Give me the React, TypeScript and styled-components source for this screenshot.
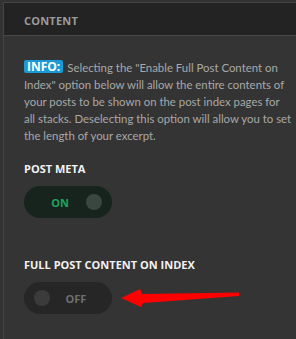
import React from "react";
import styled, { createGlobalStyle } from "styled-components";

const Global = createGlobalStyle`
  html, body { margin: 0; padding: 0; background: #333333; }
  body { font-family: Lato, "Open Sans", sans-serif; }
`;

const Frame = styled.div`
  width: 296px;
  height: 339px;
  background: #333333;
  padding-top: 2px;
  padding-left: 3px;
  box-sizing: border-box;
  overflow: hidden;
`;

const Panel = styled.div`
  border-top: 1px solid #444444;
  border-left: 1px solid #444444;
  background: #343434;
  height: 100%;
`;

const Header = styled.div`
  height: 33px;
  background: #232323;
  border-bottom: 1px solid #464646;
  display: flex;
  align-items: center;
  padding-left: 20px;
  padding-top: 3px;
  box-sizing: border-box;
  font-family: "Open Sans", sans-serif;
  font-size: 11px;
  font-weight: 700;
  letter-spacing: 0.2px;
  color: #9b9b9b;
`;

const Body = styled.div`
  padding: 23px 4px 0 20px;
  display: flex;
  flex-direction: column;
`;

const Info = styled.p`
  margin: 0;
  font-size: 11.4px;
  line-height: 17px;
  color: #a8a8a8;
  white-space: nowrap;
`;

const Badge = styled.span`
  display: inline-block;
  background: #1a9bd6;
  color: #ffffff;
  font-family: "Open Sans", sans-serif;
  font-size: 12px;
  font-weight: 700;
  padding: 0 3px;
  border-radius: 2px;
  line-height: 13px;
  margin-right: 4px;
  vertical-align: 1px;
`;

const Label = styled.div<{ $top: number }>`
  margin-top: ${(p) => p.$top}px;
  font-family: "Open Sans", sans-serif;
  font-size: 11px;
  font-weight: 700;
  color: #f2f2f2;
  line-height: 14px;
`;

const Row = styled.div`
  display: flex;
  align-items: center;
  margin-top: 10px;
  position: relative;
`;

const Toggle = styled.div<{ $on: boolean }>`
  width: 88px;
  height: 32px;
  border-radius: 16px;
  background: ${(p) => (p.$on ? "#17241d" : "#262626")};
  display: flex;
  flex-direction: ${(p) => (p.$on ? "row" : "row-reverse")};
  align-items: center;
  justify-content: space-between;
  padding: 0 10px 0 10px;
  box-sizing: border-box;
`;

const ToggleText = styled.span<{ $on: boolean }>`
  flex: 1;
  text-align: center;
  font-family: "Open Sans", sans-serif;
  font-size: 11px;
  font-weight: 700;
  color: ${(p) => (p.$on ? "#1ea45c" : "#6e6e6e")};
`;

const Knob = styled.span<{ $on: boolean }>`
  width: 16px;
  height: 16px;
  border-radius: 50%;
  background: ${(p) => (p.$on ? "#3a4741" : "#3b3b3b")};
`;

const Arrow = styled.svg`
  position: absolute;
  left: 97px;
  top: 5px;
`;

export default function App() {
  return (
    <>
      <Global />
      <Frame>
        <Panel>
          <Header>CONTENT</Header>
          <Body>
            <Info>
              <Badge>INFO:</Badge>Selecting the "Enable Full Post Content on
              <br />
              Index" option below will allow the entire contents of
              <br />
              your posts to be shown on the post index pages for
              <br />
              all stacks. Deselecting this option will allow you to set
              <br />
              the length of your excerpt.
            </Info>
            <Label $top={18}>POST META</Label>
            <Row>
              <Toggle $on>
                <ToggleText $on>ON</ToggleText>
                <Knob $on />
              </Toggle>
            </Row>
            <Label $top={40}>FULL POST CONTENT ON INDEX</Label>
            <Row>
              <Toggle $on={false}>
                <ToggleText $on={false}>OFF</ToggleText>
                <Knob $on={false} />
              </Toggle>
              <Arrow width="120" height="22" viewBox="0 0 120 22">
                <path
                  d="M0 11 L19 2 L21 7 L118 5.5 L118 9 L22 16 L20 20 Z"
                  fill="#ff0000"
                />
              </Arrow>
            </Row>
          </Body>
        </Panel>
      </Frame>
    </>
  );
}
